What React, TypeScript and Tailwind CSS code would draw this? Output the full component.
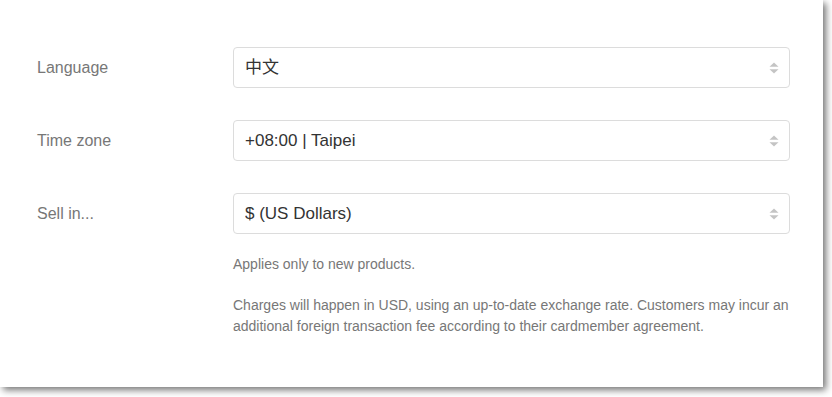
import { useState } from "react"

type Field = {
  label: string
  value: string
  options: string[]
}

const fields: Field[] = [
  { label: "Language", value: "中文", options: ["English", "中文", "日本語"] },
  { label: "Time zone", value: "+08:00 | Taipei", options: ["+00:00 | London", "+08:00 | Taipei", "+09:00 | Tokyo"] },
  { label: "Sell in...", value: "$ (US Dollars)", options: ["$ (US Dollars)", "€ (Euro)", "NT$ (New Taiwan Dollars)"] },
]

function Arrows() {
  return (
    <svg width="10" height="14" viewBox="0 0 10 14" className="pointer-events-none absolute right-[11px] top-1/2 -translate-y-1/2">
      <path d="M5 1.5 L9.5 5.8 L0.5 5.8 Z" fill="#c4c4c4" />
      <path d="M5 12.5 L9.5 8.2 L0.5 8.2 Z" fill="#c4c4c4" />
    </svg>
  )
}

function SelectRow({ field }: { field: Field }) {
  const [value, setValue] = useState(field.value)
  return (
    <div className="flex items-center">
      <label className="w-[196px] shrink-0 text-[16px] text-[#777]">{field.label}</label>
      <div className="relative flex-1">
        <select
          value={value}
          onChange={(e) => setValue(e.target.value)}
          className="h-[41px] w-full appearance-none rounded-[4px] border border-[#dcdcdc] bg-white pl-[11px] pr-8 text-[17px] text-[#333] outline-none"
        >
          {field.options.map((o) => (
            <option key={o} value={o}>{o}</option>
          ))}
        </select>
        <Arrows />
      </div>
    </div>
  )
}

export default function App() {
  return (
    <div className="h-[397px] w-[832px] bg-white" style={{ fontFamily: '"Liberation Sans", Arial, "Noto Sans CJK TC", sans-serif' }}>
      <div className="h-[387px] w-[823px] bg-white pl-[37px] pr-[33px] pt-[47px] shadow-[3px_3px_7px_rgba(0,0,0,0.55)]">
        <div className="flex flex-col gap-[32px]">
          {fields.map((f) => (
            <SelectRow key={f.label} field={f} />
          ))}
        </div>
        <div className="ml-[196px] mt-[20px] text-[14px] leading-[21px] text-[#777]">
          <p>Applies only to new products.</p>
          <p className="mt-[20px]">
            Charges will happen in USD, using an up-to-date exchange rate. Customers may incur an additional foreign transaction fee according to their cardmember agreement.
          </p>
        </div>
      </div>
    </div>
  )
}
